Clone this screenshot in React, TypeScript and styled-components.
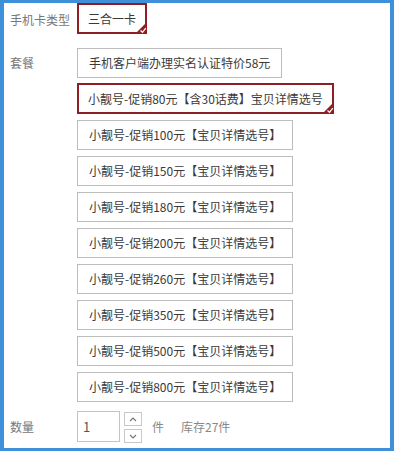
import React, { useState } from 'react';
import styled, { createGlobalStyle } from 'styled-components';

const GlobalStyle = createGlobalStyle`
  html, body {
    margin: 0;
    padding: 0;
    background: #fff;
  }
  body {
    font-family: "Noto Sans CJK SC", "Microsoft YaHei", sans-serif;
  }
`;

const RED = '#8f1d22';

const Frame = styled.div`
  width: 394px;
  height: 451px;
  box-sizing: border-box;
  border-style: solid;
  border-color: #3f90da;
  border-width: 3px 4px 3px 4px;
  padding: 1px 0 0 6px;
  background: #fff;
`;

const Row = styled.div<{ $gap?: number }>`
  display: flex;
  align-items: flex-start;
  margin-bottom: ${(p) => p.$gap ?? 0}px;
`;

const Label = styled.div<{ $h: number }>`
  width: 67px;
  flex: none;
  font-size: 12px;
  color: #777;
  line-height: ${(p) => p.$h}px;
`;

const OptionList = styled.div`
  display: flex;
  flex-direction: column;
  align-items: flex-start;
  gap: 6px;
`;

const Option = styled.div<{ $active?: boolean }>`
  position: relative;
  box-sizing: border-box;
  height: ${(p) => (p.$active ? 31 : 30)}px;
  margin: ${(p) => (p.$active ? '-1px 0 0 0' : '0')};
  padding: 0 ${(p) => (p.$active ? 9 : 11)}px;
  border: ${(p) => (p.$active ? `2px solid ${RED}` : '1px solid #bdbdbd')};
  font-size: 12px;
  color: #3a3a3a;
  line-height: ${(p) => (p.$active ? 27 : 28)}px;
  white-space: nowrap;
  cursor: pointer;
  background: #fff;
`;

const Tick = styled.svg`
  position: absolute;
  right: -2px;
  bottom: -2px;
  width: 12px;
  height: 12px;
`;

const QtyInput = styled.input`
  box-sizing: border-box;
  width: 43px;
  height: 31px;
  border: 1px solid #c4c4c4;
  padding: 0 5px;
  font-family: inherit;
  font-size: 13px;
  color: #555;
  outline: none;
`;

const Spinner = styled.div`
  display: flex;
  flex-direction: column;
  gap: 3px;
  margin: 1px 0 0 4px;
`;

const SpinButton = styled.div`
  box-sizing: border-box;
  width: 18px;
  height: 14px;
  border: 1px solid #c8c8c8;
  display: flex;
  align-items: center;
  justify-content: center;
`;

const Note = styled.span<{ $ml: number }>`
  margin-left: ${(p) => p.$ml}px;
  font-size: 12px;
  color: #888;
  line-height: 31px;
`;

const packages = [
  '手机客户端办理实名认证特价58元',
  '小靓号-促销80元【含30话费】宝贝详情选号',
  '小靓号-促销100元【宝贝详情选号】',
  '小靓号-促销150元【宝贝详情选号】',
  '小靓号-促销180元【宝贝详情选号】',
  '小靓号-促销200元【宝贝详情选号】',
  '小靓号-促销260元【宝贝详情选号】',
  '小靓号-促销350元【宝贝详情选号】',
  '小靓号-促销500元【宝贝详情选号】',
  '小靓号-促销800元【宝贝详情选号】',
];

const CornerTick = () => (
  <Tick viewBox="0 0 12 12">
    <polygon points="12,0 12,12 0,12" fill={RED} />
    <polyline points="5.5,8.5 7.5,10.3 10.8,6.2" fill="none" stroke="#fff" strokeWidth="1.3" />
  </Tick>
);

const Chevron = ({ up }: { up?: boolean }) => (
  <svg width="8" height="5" viewBox="0 0 8 5">
    <polyline
      points={up ? '1,4 4,1 7,4' : '1,1 4,4 7,1'}
      fill="none"
      stroke="#777"
      strokeWidth="1.2"
    />
  </svg>
);

const App = () => {
  const [selected, setSelected] = useState(1);
  const [qty, setQty] = useState('1');

  return (
    <>
      <GlobalStyle />
      <Frame>
        <Row $gap={13}>
          <Label $h={30} style={{ marginTop: 1 }}>手机卡类型</Label>
          <Option $active>
            三合一卡
            <CornerTick />
          </Option>
        </Row>
        <Row $gap={9}>
          <Label $h={30}>套餐</Label>
          <OptionList>
            {packages.map((p, i) => (
              <Option key={p} $active={i === selected} onClick={() => setSelected(i)}>
                {p}
                {i === selected && <CornerTick />}
              </Option>
            ))}
          </OptionList>
        </Row>
        <Row>
          <Label $h={31}>数量</Label>
          <QtyInput value={qty} onChange={(e) => setQty(e.target.value)} />
          <Spinner>
            <SpinButton>
              <Chevron up />
            </SpinButton>
            <SpinButton>
              <Chevron />
            </SpinButton>
          </Spinner>
          <Note $ml={10}>件</Note>
          <Note $ml={17}>库存27件</Note>
        </Row>
      </Frame>
    </>
  );
};

export default App;
